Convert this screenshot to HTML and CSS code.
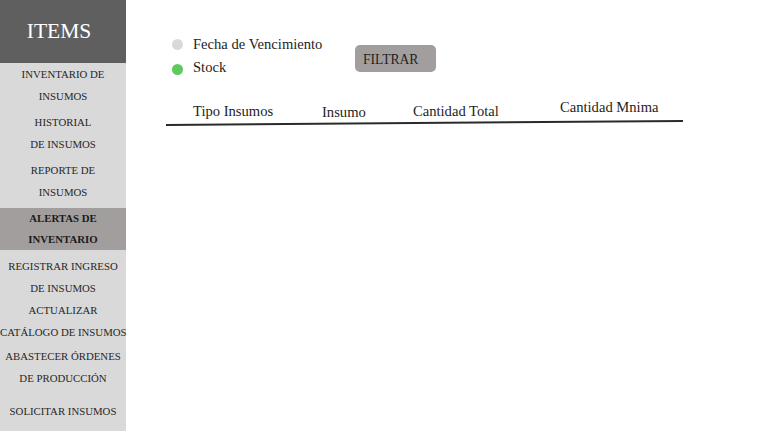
FILE: index.html
```html
<!DOCTYPE html>
<html lang="es">
<head>
<meta charset="utf-8">
<title>Alertas de inventario</title>
<link rel="stylesheet" href="styles.css">
</head>
<body>
<div class="app">
  <aside class="sidebar">
    <div class="brand">ITEMS</div>
    <nav class="nav">
      <a class="item i1">INVENTARIO DE<br>INSUMOS</a>
      <a class="item i2">HISTORIAL<br>DE INSUMOS</a>
      <a class="item i3">REPORTE DE<br>INSUMOS</a>
      <a class="item i4 active">ALERTAS DE<br>INVENTARIO</a>
      <a class="item i5">REGISTRAR INGRESO<br>DE INSUMOS</a>
      <a class="item i6">ACTUALIZAR<br>CATÁLOGO DE INSUMOS</a>
      <a class="item i7">ABASTECER ÓRDENES<br>DE PRODUCCIÓN</a>
      <a class="item i8">SOLICITAR INSUMOS</a>
    </nav>
  </aside>
  <main class="main">
    <div class="toolbar">
      <div class="legend">
        <div class="legend-row"><span class="dot dot-gray"></span>Fecha de Vencimiento</div>
        <div class="legend-row"><span class="dot dot-green"></span>Stock</div>
      </div>
      <button class="btn">FILTRAR</button>
    </div>
    <div class="table">
      <div class="thead">
        <div class="th c1">Tipo Insumos</div>
        <div class="th c2">Insumo</div>
        <div class="th c3">Cantidad Total</div>
        <div class="th c4">Cantidad Mnima</div>
      </div>
      <div class="rule"></div>
    </div>
  </main>
</div>
</body>
</html>
```
FILE: styles.css
```css
* { box-sizing: border-box; }
html, body { margin: 0; padding: 0; background: #ffffff; }
body { font-family: "Liberation Serif", "DejaVu Serif", serif; color: #1e1e1e; }
.app { display: flex; width: 767px; height: 431px; }
.sidebar { width: 126px; flex: none; background: #d9d9d9; display: flex; flex-direction: column; }
.brand { height: 63px; background: #5f5f5f; color: #ffffff; font-size: 21.5px; display: flex; align-items: center; justify-content: center; padding: 0 8px 1px 0; }
.nav { display: flex; flex-direction: column; }
.item { display: block; text-align: center; font-size: 10.8px; line-height: 22px; color: #262626; white-space: nowrap; }
.i2, .i3, .i4, .i5 { margin-top: 4px; }
.i4 { margin-top: 5px; line-height: 21px; }
.active { background: #a39e9e; font-weight: bold; color: #1a1a1a; }
.i5 { margin-top: 5px; }
.i7 { margin-top: 2px; }
.i8 { margin-top: 11px; }
.main { flex: 1; padding: 33px 0 0 40px; }
.toolbar { display: flex; align-items: flex-start; margin-left: 6px; }
.legend { width: 183px; display: flex; flex-direction: column; }
.legend-row { display: flex; align-items: center; font-size: 14.6px; line-height: 23px; }
.dot { width: 11px; height: 11px; border-radius: 50%; margin-right: 10px; flex: none; }
.dot-gray { background: #d9d9d9; }
.dot-green { background: #5ccb5c; margin-top: 3px; }
.btn { margin-top: 12px; width: 81px; height: 27px; border: none; border-radius: 5px; background: #a39e9e; color: #1e1e1e; font-family: inherit; font-size: 13.6px; text-align: left; padding: 3px 0 0 8px; }
.table { width: 517px; margin-top: 20px; }
.thead { display: flex; align-items: flex-end; padding-left: 27px; }
.th { font-size: 14.6px; line-height: 16px; }
.c1 { width: 129px; }
.c2 { width: 91px; margin-bottom: -1px; }
.c3 { width: 147px; }
.c4 { margin-bottom: 4px; }
.rule { margin-top: 3px; height: 1.5px; background: #2a2a2a; transform: rotate(-0.44deg); }
```
